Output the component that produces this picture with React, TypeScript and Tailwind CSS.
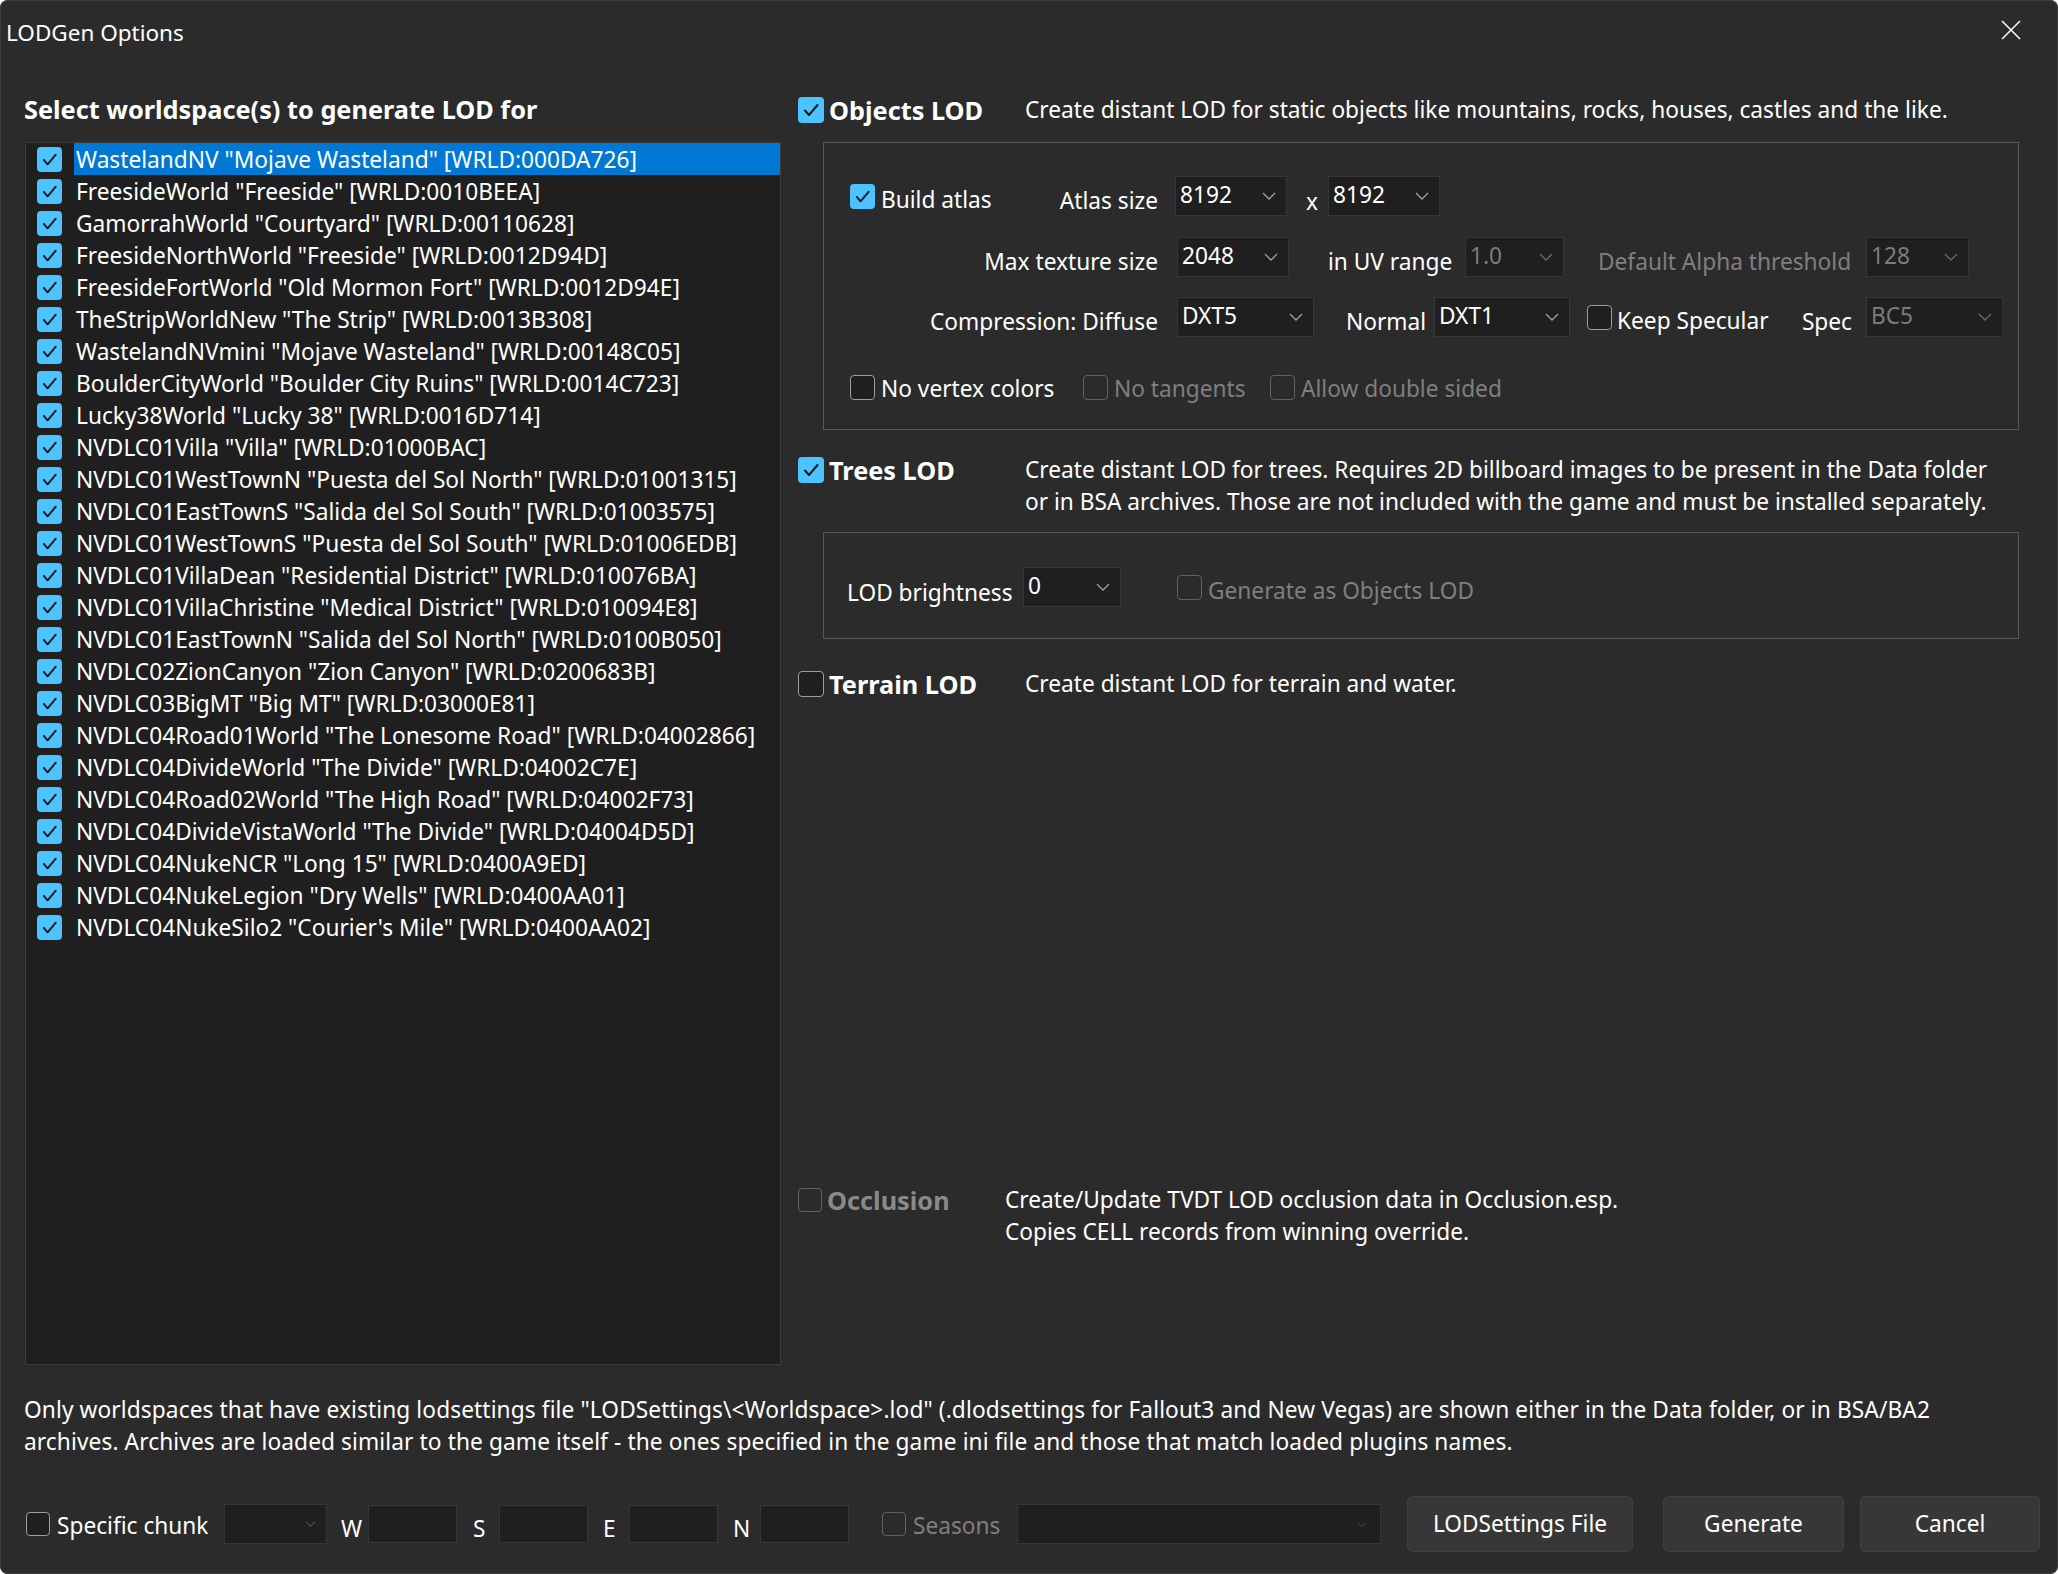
import React from "react";

const worlds = [
  'WastelandNV "Mojave Wasteland" [WRLD:000DA726]',
  'FreesideWorld "Freeside" [WRLD:0010BEEA]',
  'GamorrahWorld "Courtyard" [WRLD:00110628]',
  'FreesideNorthWorld "Freeside" [WRLD:0012D94D]',
  'FreesideFortWorld "Old Mormon Fort" [WRLD:0012D94E]',
  'TheStripWorldNew "The Strip" [WRLD:0013B308]',
  'WastelandNVmini "Mojave Wasteland" [WRLD:00148C05]',
  'BoulderCityWorld "Boulder City Ruins" [WRLD:0014C723]',
  'Lucky38World "Lucky 38" [WRLD:0016D714]',
  'NVDLC01Villa "Villa" [WRLD:01000BAC]',
  'NVDLC01WestTownN "Puesta del Sol North" [WRLD:01001315]',
  'NVDLC01EastTownS "Salida del Sol South" [WRLD:01003575]',
  'NVDLC01WestTownS "Puesta del Sol South" [WRLD:01006EDB]',
  'NVDLC01VillaDean "Residential District" [WRLD:010076BA]',
  'NVDLC01VillaChristine "Medical District" [WRLD:010094E8]',
  'NVDLC01EastTownN "Salida del Sol North" [WRLD:0100B050]',
  'NVDLC02ZionCanyon "Zion Canyon" [WRLD:0200683B]',
  'NVDLC03BigMT "Big MT" [WRLD:03000E81]',
  'NVDLC04Road01World "The Lonesome Road" [WRLD:04002866]',
  'NVDLC04DivideWorld "The Divide" [WRLD:04002C7E]',
  'NVDLC04Road02World "The High Road" [WRLD:04002F73]',
  'NVDLC04DivideVistaWorld "The Divide" [WRLD:04004D5D]',
  'NVDLC04NukeNCR "Long 15" [WRLD:0400A9ED]',
  'NVDLC04NukeLegion "Dry Wells" [WRLD:0400AA01]',
  'NVDLC04NukeSilo2 "Courier\'s Mile" [WRLD:0400AA02]',
];

function Check({
  checked = false,
  disabled = false,
  size = 25,
}: {
  checked?: boolean;
  disabled?: boolean;
  size?: number;
}) {
  if (checked) {
    return (
      <div
        className="shrink-0 rounded-[4px] bg-[#4cc2ff] flex items-center justify-center"
        style={{ width: size, height: size }}
      >
        <svg width={size} height={size} viewBox="0 0 26 26">
          <path
            d="M7 13.5 L11 18 L19.5 8"
            fill="none"
            stroke="#1a1a1a"
            strokeWidth="2"
            strokeLinecap="round"
            strokeLinejoin="round"
          />
        </svg>
      </div>
    );
  }
  return (
    <div
      className={
        disabled
          ? "shrink-0 rounded-[4px] border-[1.5px] border-[#626262] bg-[#2b2b2b]"
          : "shrink-0 rounded-[4px] border-[1.5px] border-[#9d9d9d] bg-[#1f1f1f]"
      }
      style={{ width: size, height: size }}
    />
  );
}

function Chevron({ color = "#a0a0a0", w = 14, h = 8 }: { color?: string; w?: number; h?: number }) {
  return (
    <svg width={w} height={h} viewBox="0 0 14 8" className="shrink-0">
      <path d="M1 1 L7 7 L13 1" fill="none" stroke={color} strokeWidth="1.3" />
    </svg>
  );
}

function Combo({
  value,
  w,
  disabled = false,
}: {
  value: string;
  w: number;
  disabled?: boolean;
}) {
  return (
    <div
      className="shrink-0 h-[40px] bg-[#1f1f1f] border border-[#363636] flex items-center justify-between pl-[4px] pr-[10px]"
      style={{ width: w }}
    >
      <span className={disabled ? "text-[#7c7c7c] -mt-[2px]" : "text-white -mt-[2px]"}>{value}</span>
      <Chevron color={disabled ? "#6a6a6a" : "#a0a0a0"} />
    </div>
  );
}

function Header({
  checked,
  disabled = false,
  label,
  labelW,
  lines,
  size = 26,
}: {
  checked: boolean;
  disabled?: boolean;
  label: string;
  labelW: number;
  lines: string[];
  size?: number;
}) {
  return (
    <div className="flex items-start">
      <div className="flex items-center h-[32px] shrink-0" style={{ width: labelW }}>
        <Check checked={checked} disabled={disabled} size={size} />
        <span
          className={
            disabled
              ? "ml-[5px] font-bold text-[25.3px] text-[#8a8a8a] whitespace-nowrap"
              : "ml-[5px] font-bold text-[25.3px] text-white whitespace-nowrap"
          }
        >
          {label}
        </span>
      </div>
      <div className="leading-[32px] whitespace-nowrap">
        {lines.map((l, i) => (
          <div key={i}>{l}</div>
        ))}
      </div>
    </div>
  );
}

function Edit() {
  return <div className="shrink-0 w-[89px] h-[38px] bg-[#1f1f1f] border border-[#363636]" />;
}

function Button({ label, w }: { label: string; w: number }) {
  return (
    <div
      className="shrink-0 h-[56px] rounded-[5px] bg-[#373737] border border-[#404040] flex items-center justify-center whitespace-nowrap"
      style={{ width: w }}
    >
      {label}
    </div>
  );
}

export default function App() {
  return (
    <div className="w-[2058px] h-[1574px] bg-[#2b2b2b] rounded-[8px] ring-1 ring-inset ring-[#3c3c3c] overflow-hidden text-white text-[22.7px] leading-[32px] font-['Noto_Sans',sans-serif] flex flex-col">
      {/* Title bar */}
      <div className="h-[62px] shrink-0 flex items-center justify-between">
        <span className="pl-[6px] mt-[4px] text-[22.5px]">LODGen Options</span>
        <svg width="20" height="20" viewBox="0 0 20 20" className="mr-[37px] -mt-[2px]">
          <path d="M1 1 L19 19 M19 1 L1 19" stroke="#ffffff" strokeWidth="1.5" />
        </svg>
      </div>

      {/* Main */}
      <div className="h-[1303px] shrink-0 flex">
        {/* Left column */}
        <div className="ml-[25px] w-[756px] flex flex-col pt-[31px]">
          <div className="h-[32px] -ml-[1px] flex items-center font-bold text-[25.3px] whitespace-nowrap">
            Select worldspace(s) to generate LOD for
          </div>
          <div className="mt-[17px] flex-1 bg-[#1f1f1f] border border-[#3a3a3a] flex flex-col">
            {worlds.map((w, i) => (
              <div key={i} className="h-[32px] shrink-0 flex items-center pl-[11px]">
                <Check checked size={25} />
                <div
                  className={
                    i === 0
                      ? "ml-[12px] flex-1 h-[32px] flex items-center pl-[2px] pt-[2px] bg-[#0078d4] whitespace-nowrap"
                      : "ml-[12px] flex-1 h-[32px] flex items-center pl-[2px] pt-[2px] whitespace-nowrap"
                  }
                >
                  {w}
                </div>
              </div>
            ))}
          </div>
        </div>

        {/* Right column */}
        <div className="ml-[17px] w-[1221px] flex flex-col pt-[32px]">
          <Header
            checked
            label="Objects LOD"
            labelW={227}
            lines={["Create distant LOD for static objects like mountains, rocks, houses, castles and the like."]}
          />

          {/* Objects group */}
          <div className="ml-[25px] mt-[16px] h-[288px] shrink-0 border border-[#585858] flex flex-col pt-[33px]">
            {/* Row 1 */}
            <div className="h-[40px] flex items-center pl-[26px]">
              <div className="w-[308px] flex items-center justify-between">
                <div className="flex items-center">
                  <Check checked size={25} />
                  <span className="ml-[6px] mt-[7px] whitespace-nowrap">Build atlas</span>
                </div>
                <span className="mt-[10px] whitespace-nowrap">Atlas size</span>
              </div>
              <div className="ml-[17px]">
                <Combo value="8192" w={112} />
              </div>
              <div className="w-[41px] pl-[19px] mt-[12px]">x</div>
              <Combo value="8192" w={112} />
            </div>

            {/* Row 2 */}
            <div className="h-[40px] mt-[21px] flex items-center pl-[26px]">
              <div className="w-[308px] text-right mt-[10px] whitespace-nowrap">Max texture size</div>
              <div className="ml-[19px]">
                <Combo value="2048" w={112} />
              </div>
              <div className="w-[176px] pl-[39px] mt-[10px] whitespace-nowrap">in UV range</div>
              <Combo value="1.0" w={99} disabled />
              <div className="w-[302px] pl-[34px] mt-[10px] whitespace-nowrap text-[#7f7f7f]">
                Default Alpha threshold
              </div>
              <Combo value="128" w={103} disabled />
            </div>

            {/* Row 3 */}
            <div className="h-[40px] mt-[20px] flex items-center pl-[26px]">
              <div className="w-[308px] text-right mt-[10px] whitespace-nowrap">Compression: Diffuse</div>
              <div className="ml-[19px]">
                <Combo value="DXT5" w={137} />
              </div>
              <div className="w-[120px] pl-[32px] mt-[10px]">Normal</div>
              <Combo value="DXT1" w={136} />
              <div className="w-[296px] flex items-center justify-between">
                <div className="flex items-center ml-[17px]">
                  <Check size={25} />
                  <span className="ml-[5px] mt-[7px] whitespace-nowrap">Keep Specular</span>
                </div>
                <span className="pr-[14px] mt-[10px]">Spec</span>
              </div>
              <Combo value="BC5" w={137} disabled />
            </div>

            {/* Row 4 */}
            <div className="h-[40px] mt-[30px] flex items-center pl-[26px]">
              <div className="w-[233px] flex items-center">
                <Check size={25} />
                <span className="ml-[6px] mt-[4px] whitespace-nowrap">No vertex colors</span>
              </div>
              <div className="w-[187px] flex items-center">
                <Check size={25} disabled />
                <span className="ml-[6px] mt-[4px] whitespace-nowrap text-[#7f7f7f]">No tangents</span>
              </div>
              <div className="flex items-center">
                <Check size={25} disabled />
                <span className="ml-[6px] mt-[4px] whitespace-nowrap text-[#7f7f7f]">Allow double sided</span>
              </div>
            </div>
          </div>

          <div className="mt-[24px]">
            <Header
              checked
              label="Trees LOD"
              labelW={227}
              lines={[
                "Create distant LOD for trees. Requires 2D billboard images to be present in the Data folder",
                "or in BSA archives. Those are not included with the game and must be installed separately.",
              ]}
            />
          </div>

          {/* Trees group */}
          <div className="ml-[25px] mt-[14px] h-[107px] shrink-0 border border-[#585858] pt-[34px]">
            <div className="h-[40px] flex items-center pl-[23px]">
              <div className="w-[176px] mt-[12px] whitespace-nowrap">LOD brightness</div>
              <Combo value="0" w={98} />
              <div className="ml-[56px] flex items-center">
                <Check size={25} disabled />
                <span className="ml-[6px] mt-[8px] whitespace-nowrap text-[#7f7f7f]">Generate as Objects LOD</span>
              </div>
            </div>
          </div>

          <div className="mt-[29px]">
            <Header
              checked={false}
              label="Terrain LOD"
              labelW={227}
              lines={["Create distant LOD for terrain and water."]}
            />
          </div>

          <div className="mt-auto mb-[117px]">
            <Header
              checked={false}
              disabled
              size={24}
              label="Occlusion"
              labelW={207}
              lines={[
                "Create/Update TVDT LOD occlusion data in Occlusion.esp.",
                "Copies CELL records from winning override.",
              ]}
            />
          </div>
        </div>
      </div>

      {/* Bottom note */}
      <div className="mt-[29px] ml-[24px] leading-[32px] whitespace-nowrap tracking-[0.1px]">
        <div>
          Only worldspaces that have existing lodsettings file "LODSettings\&lt;Worldspace&gt;.lod" (.dlodsettings for Fallout3 and New Vegas) are shown either in the Data folder, or in BSA/BA2
        </div>
        <div>
          archives. Archives are loaded similar to the game itself - the ones specified in the game ini file and those that match loaded plugins names.
        </div>
      </div>

      {/* Bottom row */}
      <div className="mt-[38px] h-[56px] flex items-center pl-[26px]">
        <div className="w-[198px] flex items-center">
          <Check size={24} />
          <span className="ml-[7px] mt-[3px] whitespace-nowrap">Specific chunk</span>
        </div>
        <div className="shrink-0 w-[103px] h-[40px] bg-[#1f1f1f] border border-[#363636] flex items-center justify-end pr-[10px]">
          <Chevron color="#6e6e6e" w={11} h={6} />
        </div>
        <div className="w-[41px] pl-[14px] mt-[10px]">W</div>
        <Edit />
        <div className="w-[42px] pl-[16px] mt-[10px]">S</div>
        <Edit />
        <div className="w-[41px] pl-[15px] mt-[10px]">E</div>
        <Edit />
        <div className="w-[42px] pl-[15px] mt-[10px]">N</div>
        <Edit />
        <div className="w-[168px] pl-[33px] flex items-center">
          <Check size={24} disabled />
          <span className="ml-[7px] mt-[3px] text-[#7f7f7f]">Seasons</span>
        </div>
        <div className="shrink-0 w-[364px] h-[40px] bg-[#1f1f1f] border border-[#363636] flex items-center justify-end pr-[14px]">
          <Chevron color="#5e5e5e" w={9} h={5} />
        </div>
        <div className="ml-[26px]">
          <Button label="LODSettings File" w={226} />
        </div>
        <div className="ml-[30px]">
          <Button label="Generate" w={181} />
        </div>
        <div className="ml-[16px]">
          <Button label="Cancel" w={180} />
        </div>
      </div>
    </div>
  );
}
